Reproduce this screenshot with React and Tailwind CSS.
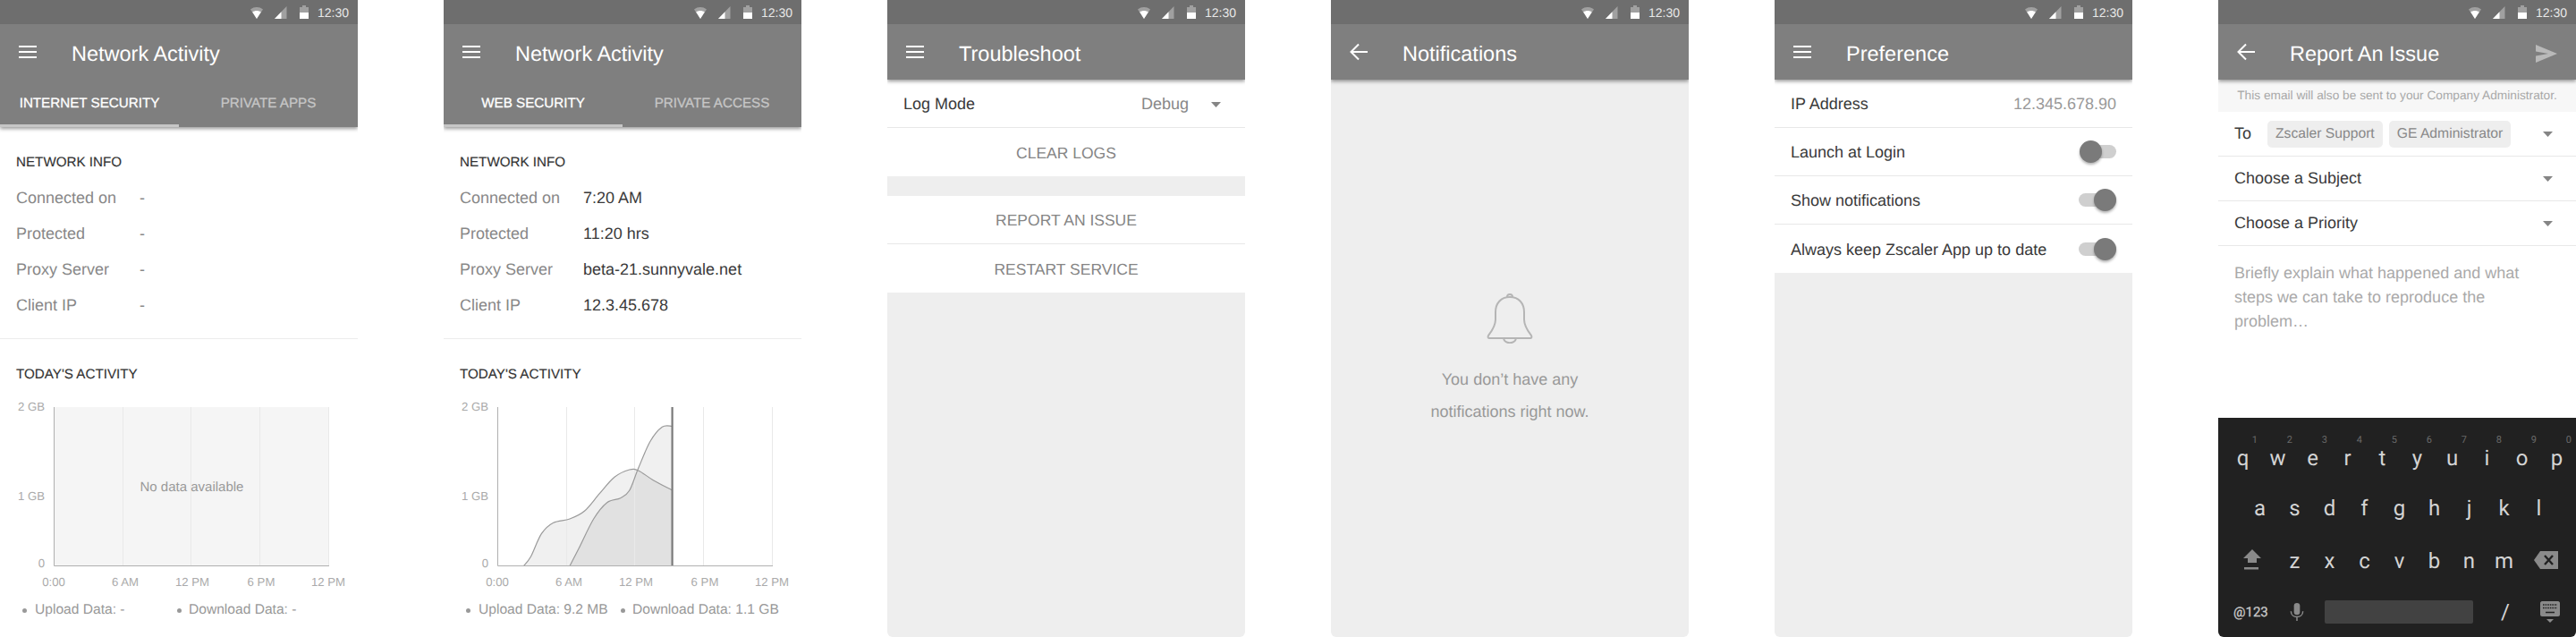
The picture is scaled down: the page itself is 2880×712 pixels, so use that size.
import React from 'react';

const UPLOAD = [[29.5,177.5],[37.7,166.7],[49.3,141.7],[62.7,129.3],[81,125],[97.7,116],[114.3,96.7],[131,78.3],[147.7,70],[157.7,71],[174.3,81.7],[195,92.7]];
const DOWNLOAD = [[81,177.5],[91,158.3],[107.7,125],[122.7,106.7],[137.7,101.7],[147.7,93.3],[157.7,68.3],[171,38.3],[184.3,22.3],[195,21.3]];

// catmull-rom through the points
function smooth(pts) {
  let d = `M${pts[0][0]} ${pts[0][1]}`;
  for (let i = 0; i < pts.length - 1; i++) {
    const p0 = pts[i - 1] || pts[i], p1 = pts[i], p2 = pts[i + 1], p3 = pts[i + 2] || p2;
    const c1 = [p1[0] + (p2[0] - p0[0]) / 6, p1[1] + (p2[1] - p0[1]) / 6];
    const c2 = [p2[0] - (p3[0] - p1[0]) / 6, p2[1] - (p3[1] - p1[1]) / 6];
    d += ` C${c1[0]} ${c1[1]} ${c2[0]} ${c2[1]} ${p2[0]} ${p2[1]}`;
  }
  return d;
}

function StatusBar() {
  return (
    <div className="h-[27px] bg-[#6e6e6e] flex items-center justify-end pr-[10px]">
      <svg width="14" height="13" viewBox="0 0 14 13" className="mt-[1px]">
        <path d="M0 2.5C4 -0.8 10 -0.8 14 2.5L7 13Z" fill="#fff" fillOpacity="0.35" />
        <path d="M2.2 5.6C5 3.6 9 3.6 11.8 5.6L7 13Z" fill="#fff" />
      </svg>
      <svg width="14" height="14" viewBox="0 0 14 14" className="ml-[13px]">
        <path d="M0 14L13.5 0V14Z" fill="#fff" fillOpacity="0.35" />
        <path d="M0 14L7.5 6.3V14Z" fill="#fff" />
      </svg>
      <svg width="10" height="15" viewBox="0 0 10 15" className="ml-[14px]">
        <path d="M3 0H7V2H10V15H0V2H3Z" fill="#fff" fillOpacity="0.35" />
        <path d="M0 8H10V15H0Z" fill="#fff" />
      </svg>
      <span className="ml-[10px] text-[14px] leading-none text-[#e8e8e8]">12:30</span>
    </div>
  );
}

function Menu() {
  return (
    <div className="w-[20px] ml-[21px] mr-[39px] flex flex-col gap-[4px]">
      <div className="h-[2px] bg-white" />
      <div className="h-[2px] bg-white" />
      <div className="h-[2px] bg-white" />
    </div>
  );
}

function Back() {
  return (
    <svg width="20" height="20" viewBox="0 0 20 20" className="ml-[21px] mr-[39px]" fill="none" stroke="#fff" strokeWidth="2">
      <path d="M20 10H2M10 1.5L1.5 10L10 18.5" />
    </svg>
  );
}

function AppBar({ title, back, send }) {
  return (
    <div className="relative z-10 shadow-[0_2px_4px_rgba(0,0,0,0.4)]">
      <StatusBar />
      <div className="h-[62px] bg-[#7f7f7f] flex items-center">
        {back ? <Back /> : <Menu />}
        <span className="mt-[5px] text-[23.5px] leading-none text-white">{title}</span>
        {send && (
          <svg width="24" height="20" viewBox="0 0 24 20" className="ml-auto mr-[21px] mt-[4px]">
            <path d="M0 0L24 10L0 20V12.5L14 10L0 7.5Z" fill="#b9b9b9" />
          </svg>
        )}
      </div>
    </div>
  );
}

function TabBar({ title, left, right }) {
  return (
    <div className="relative z-10 shadow-[0_2px_4px_rgba(0,0,0,0.4)]">
      <StatusBar />
      <div className="bg-[#7f7f7f]">
        <div className="h-[62px] flex items-center">
          <Menu />
          <span className="mt-[5px] text-[23.5px] leading-none text-white">{title}</span>
        </div>
        <div className="h-[53px] flex">
          <div className="w-1/2 flex items-center justify-center pt-[4px] border-b-[3px] border-[#c6c6c6] text-[15.2px] text-white [-webkit-text-stroke:0.3px_#fff]">{left}</div>
          <div className="w-1/2 flex items-center justify-center pt-[1px] text-[15.2px] text-[#c6c6c6] [-webkit-text-stroke:0.3px_#c6c6c6]">{right}</div>
        </div>
      </div>
    </div>
  );
}

function Caret() {
  return <svg width="11" height="6" viewBox="0 0 11 6"><path d="M0 0H11L5.5 6Z" fill="#858585" /></svg>;
}

function Toggle({ on }) {
  return (
    <div className="relative w-[42px] h-[25px] -mt-[2px] flex items-center justify-end">
      <div className={on ? 'w-[42px] h-[15px] rounded-full bg-[#cfcfcf]' : 'w-[36px] h-[15px] rounded-full bg-[#cfcfcf]'} />
      <div className={on
        ? 'absolute right-0 w-[25px] h-[25px] rounded-full bg-[#7a7a7a] shadow-[0_2px_3px_rgba(0,0,0,0.3)]'
        : 'absolute right-[16px] w-[25px] h-[25px] rounded-full bg-[#7a7a7a] shadow-[0_2px_3px_rgba(0,0,0,0.3)]'} />
    </div>
  );
}

function Row({ children, last }) {
  return (
    <div className={`h-[54px] bg-white px-[18px] pt-[2px] flex items-center justify-between text-[18px] text-[#3a3a3a] ${last ? '' : 'border-b border-[#e8e8e8]'}`}>
      {children}
    </div>
  );
}

function ActionRow({ label, last }) {
  return (
    <div className={`h-[54px] bg-white pt-[2px] flex items-center justify-center text-[17.5px] text-[#858585] ${last ? '' : 'border-b border-[#e8e8e8]'}`}>{label}</div>
  );
}

function Heading({ children, className }) {
  return <div className={`px-[18px] text-[15.2px] text-[#333] [-webkit-text-stroke:0.15px_#333] ${className}`}>{children}</div>;
}

function Chart({ empty }) {
  const grid = [77, 153, 230, 307];
  return (
    <div className="relative">
      <svg width="309" height="178" viewBox="0 0 309 178" className="block">
        {empty && <rect x="0" y="0" width="308" height="178" fill="#f5f5f5" />}
        {!empty && (
          <>
            <path d={`${smooth(UPLOAD)} V177.5 H29.5Z`} fill="#000" fillOpacity="0.06" />
            <path d={`${smooth(DOWNLOAD)} V177.5 H81Z`} fill="#000" fillOpacity="0.06" />
          </>
        )}
        {grid.map(x => <line key={x} x1={x + 0.5} x2={x + 0.5} y1="0" y2="177" stroke="#e9e9e9" />)}
        {!empty && (
          <>
            <path d={smooth(UPLOAD)} fill="none" stroke="#9a9a9a" strokeWidth="1.2" />
            <path d={smooth(DOWNLOAD)} fill="none" stroke="#9a9a9a" strokeWidth="1.2" />
            <rect x="194.5" y="0" width="2.2" height="178" fill="#7a7a7a" />
          </>
        )}
        <path d="M0.5 0V177.5H308" fill="none" stroke="#b0b0b0" />
      </svg>
      {empty && <div className="absolute inset-0 pt-[2px] flex items-center justify-center text-[15px] text-[#999]">No data available</div>}
    </div>
  );
}

const X_LABELS = [
  { t: '0:00', c: 'ml-[25px]' },
  { t: '6 AM', c: 'ml-[10px]' },
  { t: '12 PM', c: 'ml-[5px]' },
  { t: '6 PM', c: 'ml-[7px]' },
  { t: '12 PM', c: 'ml-[5px]' },
];

function NetworkScreen({ left, right, info, upload, download, empty }) {
  const rows = ['Connected on', 'Protected', 'Proxy Server', 'Client IP'];
  return (
    <div className="w-[400px] h-[712px] shrink-0 bg-white overflow-hidden">
      <TabBar title="Network Activity" left={left} right={right} />
      <Heading className="pt-[30px] h-[59px] leading-[20px]">NETWORK INFO</Heading>
      {rows.map((label, i) => (
        <div key={label} className="h-[40px] px-[18px] flex items-center text-[18px]">
          <span className="w-[138px] text-[#888]">{label}</span>
          <span className={empty ? 'text-[#888]' : 'text-[#3a3a3a]'}>{info[i]}</span>
        </div>
      ))}
      <div className="mt-[17px] border-t border-[#ececec]" />
      <Heading className="mt-[30px] leading-[20px]">TODAY'S ACTIVITY</Heading>
      <div className="mt-[26px] flex h-[178px]">
        <div className="w-[60px] pr-[10px] text-right text-[13.2px] leading-[16px] text-[#aaa] -mt-[8px]">
          <div>2 GB</div>
          <div className="mt-[84px]">1 GB</div>
          <div className="mt-[59px]">0</div>
        </div>
        <Chart empty={empty} />
      </div>
      <div className="mt-[10px] flex text-[13.2px] leading-[16px] text-[#aaa]">
        {X_LABELS.map((l, i) => <div key={i} className={`w-[70px] shrink-0 text-center ${l.c}`}>{l.t}</div>)}
      </div>
      <div className="mt-[13px] flex pl-[25px] text-[15.6px] leading-[20px] text-[#999]">
        <div className="w-[173px] flex items-center"><span className="w-[5px] h-[5px] rounded-full bg-[#999] mr-[9px]" />{upload}</div>
        <div className="flex items-center whitespace-nowrap"><span className="w-[5px] h-[5px] rounded-full bg-[#999] mr-[8px]" />{download}</div>
      </div>
    </div>
  );
}

function Troubleshoot() {
  return (
    <div className="w-[400px] h-[712px] shrink-0 rounded-b-[6px] bg-[#eeeeee] overflow-hidden">
      <AppBar title="Troubleshoot" />
      <Row>
        <span>Log Mode</span>
        <span className="flex items-center text-[#888]">Debug<span className="ml-[25px] mr-[9px] flex"><Caret /></span></span>
      </Row>
      <ActionRow label="CLEAR LOGS" last />
      <div className="h-[22px]" />
      <ActionRow label="REPORT AN ISSUE" />
      <ActionRow label="RESTART SERVICE" last />
    </div>
  );
}

function Notifications() {
  return (
    <div className="w-[400px] h-[712px] shrink-0 rounded-b-[6px] bg-[#eeeeee] overflow-hidden">
      <AppBar title="Notifications" back />
      <div className="flex flex-col items-center pt-[239px]">
        <svg width="52" height="56" viewBox="0 0 52 56" fill="none" stroke="#b5b5b5" strokeWidth="2">
          <path d="M26 4C16 4 10 11 10 21V29C10 37 5 43 2 47C1 49 2 50 3 50H49C50 50 51 49 50 47C47 43 42 37 42 29V21C42 11 36 4 26 4Z" />
          <path d="M23 4C23 0 29 0 29 4" />
          <path d="M19 50C20 57 32 57 33 50" />
        </svg>
        <div className="mt-[22px] text-[18px] leading-[36px] text-[#999] text-center">
          You don’t have any<br />notifications right now.
        </div>
      </div>
    </div>
  );
}

function Preference() {
  return (
    <div className="w-[400px] h-[712px] shrink-0 rounded-b-[6px] bg-[#eeeeee] overflow-hidden">
      <AppBar title="Preference" />
      <Row><span>IP Address</span><span className="text-[#999]">12.345.678.90</span></Row>
      <Row><span>Launch at Login</span><Toggle /></Row>
      <Row><span>Show notifications</span><Toggle on /></Row>
      <Row last><span>Always keep Zscaler App up to date</span><Toggle on /></Row>
    </div>
  );
}

const ROW1 = ['q', 'w', 'e', 'r', 't', 'y', 'u', 'i', 'o', 'p'];
const ROW2 = ['a', 's', 'd', 'f', 'g', 'h', 'j', 'k', 'l'];
const ROW3 = ['z', 'x', 'c', 'v', 'b', 'n', 'm'];
const DIGITS = ['1', '2', '3', '4', '5', '6', '7', '8', '9', '0'];

function Key({ label, digit }) {
  return (
    <div className="relative w-[39px] text-center">
      {label}
      {digit && <span className="absolute right-[3px] -top-[12px] text-[11px] leading-none text-[#6a6a6a]">{digit}</span>}
    </div>
  );
}

function Keyboard() {
  return (
    <div className="absolute bottom-0 inset-x-0 h-[245px] bg-[#212121] font-['Roboto',sans-serif] text-[24px] leading-[28px] text-[#d4d4d4]">
      <div className="h-[73px] pt-[31px] pl-[8px] flex">
        {ROW1.map((k, i) => <Key key={k} label={k} digit={DIGITS[i]} />)}
      </div>
      <div className="h-[58px] pt-[14px] pl-[27px] flex">
        {ROW2.map(k => <Key key={k} label={k} />)}
      </div>
      <div className="h-[57px] pt-[15px] pl-[27px] flex items-start">
        <div className="w-[39px] pl-[1px] pt-[1px]">
          <svg width="20" height="24" viewBox="0 0 20 24" fill="#8a8a8a"><path d="M10 0L20 10H15V15H5V10H0Z" /><path d="M1 20H17V22.5H1Z" /></svg>
        </div>
        <div className="flex">
          {ROW3.map(k => <Key key={k} label={k} />)}
        </div>
        <svg width="27" height="20" viewBox="0 0 27 20" className="ml-[14px] mt-[3px]">
          <path d="M7 0H27V20H7L0 10Z" fill="#8a8a8a" />
          <path d="M12 5L21 15M21 5L12 15" stroke="#212121" strokeWidth="2.4" />
        </svg>
      </div>
      <div className="h-[57px] flex items-center">
        <span className="ml-[17px] w-[44px] text-[15px] leading-[16px] text-[#c8c8c8] [-webkit-text-stroke:0.3px_#c8c8c8]">@123</span>
        <svg width="16" height="20" viewBox="0 0 18 24" className="ml-[19px]" fill="none" stroke="#8a8a8a">
          <rect x="5" y="0" width="8" height="16" rx="4" fill="#8a8a8a" stroke="none" />
          <path d="M1 11C1 21 17 21 17 11M9 18V24" strokeWidth="1.8" />
        </svg>
        <div className="ml-[23px] w-[166px] h-[26px] rounded-[2px] bg-[#424242]" />
        <span className="ml-[31px] text-[24px] leading-[32px]">/</span>
        <svg width="22" height="24" viewBox="0 0 22 24" className="ml-[34px]">
          <path d="M2 0H20C21 0 22 1 22 2V15C22 16 21 17 20 17H2C1 17 0 16 0 15V2C0 1 1 0 2 0Z" fill="#8a8a8a" />
          <path d="M3 4H19M3 7.5H19" stroke="#212121" strokeWidth="1.4" strokeDasharray="1.6 1" />
          <path d="M6 12.5H16" stroke="#212121" strokeWidth="1.4" />
          <path d="M7 20H15L11 24Z" fill="#8a8a8a" />
        </svg>
      </div>
    </div>
  );
}

function ReportIssue() {
  return (
    <div className="relative w-[400px] h-[712px] shrink-0 rounded-b-[6px] bg-white overflow-hidden">
      <AppBar title="Report An Issue" back send />
      <div className="h-[36px] bg-[#f7f7f7] flex items-center justify-center text-[13.7px] text-[#a8a8a8]">This email will also be sent to your Company Administrator.</div>
      <div className="h-[50px] pl-[18px] pr-[26px] flex items-center border-b border-[#e8e8e8] text-[18px] text-[#3a3a3a]">
        <span className="w-[37px]">To</span>
        <span className="h-[30px] px-[9px] flex items-center rounded-[5px] bg-[#eeeeee] text-[15.7px] text-[#888]">Zscaler Support</span>
        <span className="h-[30px] ml-[7px] px-[9px] flex items-center rounded-[5px] bg-[#eeeeee] text-[15.7px] text-[#888]">GE Administrator</span>
        <span className="ml-auto flex"><Caret /></span>
      </div>
      {['Choose a Subject', 'Choose a Priority'].map(label => (
        <div key={label} className="h-[50px] pl-[18px] pr-[26px] flex items-center justify-between border-b border-[#e8e8e8] text-[18px] text-[#3a3a3a]">
          <span>{label}</span><Caret />
        </div>
      ))}
      <div className="px-[18px] pt-[17px] pr-[20px] text-[18px] leading-[27px] text-[#aaa]">
        Briefly explain what happened and what steps we can take to reproduce the problem…
      </div>
      <Keyboard />
    </div>
  );
}

export default function App() {
  return (
    <div className="w-[2880px] h-[712px] overflow-hidden flex gap-[96px] bg-white font-['Liberation_Sans',Arial,sans-serif] [text-rendering:geometricPrecision]">
      <NetworkScreen empty left="INTERNET SECURITY" right="PRIVATE APPS" info={['-', '-', '-', '-']} upload="Upload Data: -" download="Download Data: -" />
      <NetworkScreen left="WEB SECURITY" right="PRIVATE ACCESS" info={['7:20 AM', '11:20 hrs', 'beta-21.sunnyvale.net', '12.3.45.678']} upload="Upload Data: 9.2 MB" download="Download Data: 1.1 GB" />
      <Troubleshoot />
      <Notifications />
      <Preference />
      <ReportIssue />
    </div>
  );
}
